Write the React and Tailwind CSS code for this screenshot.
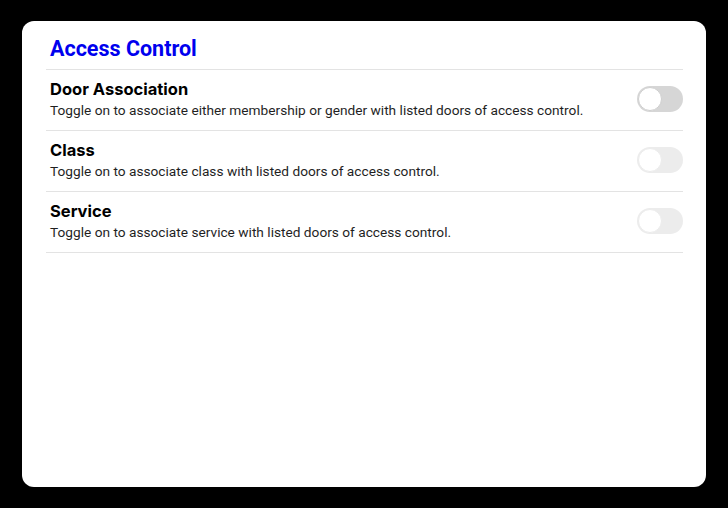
import React, { useState } from 'react';

const settings = [
  {
    id: 'door',
    title: 'Door Association',
    description: 'Toggle on to associate either membership or gender with listed doors of access control.',
    disabled: false,
  },
  {
    id: 'class',
    title: 'Class',
    description: 'Toggle on to associate class with listed doors of access control.',
    disabled: true,
  },
  {
    id: 'service',
    title: 'Service',
    description: 'Toggle on to associate service with listed doors of access control.',
    disabled: true,
  },
];

const Toggle = ({ checked, disabled, onChange }) => (
  <button
    type="button"
    role="switch"
    aria-checked={checked}
    disabled={disabled}
    onClick={onChange}
    className={`relative flex h-[26px] w-[46px] shrink-0 items-center rounded-full px-[1px] ${
      disabled ? 'bg-[#ececec]' : checked ? 'bg-[#2563eb]' : 'bg-[#d6d6d6]'
    }`}
  >
    <span
      className={`h-[24px] w-[24px] rounded-full border bg-white transition-transform ${
        disabled ? 'border-[#ececec]' : 'border-[#cfcfcf]'
      } ${checked ? 'translate-x-[20px]' : 'translate-x-0'}`}
    />
  </button>
);

const App = () => {
  const [values, setValues] = useState({ door: false, class: false, service: false });

  return (
    <div className="min-h-[508px] bg-black px-[22px] py-[21px] font-['Roboto',sans-serif]">
      <div className="h-[466px] rounded-[12px] bg-white pl-[24px] pr-[23px] pt-[14px]">
        <h1 className="border-b border-[#e3e3e3] px-1 pb-[6px] text-[21.5px] font-bold leading-7 text-[#0000ee]">
          Access Control
        </h1>

        {settings.map((item) => (
          <div key={item.id} className="flex items-center justify-between border-b border-[#e3e3e3] pl-1 pt-2 pb-[10px]">
            <div>
              <h2 className="font-[Inter,sans-serif] text-[16.5px] font-bold leading-[22px] text-black">
                {item.title}
              </h2>
              <p className="text-[13.7px] leading-5 text-[#1f1f1f]">{item.description}</p>
            </div>
            <Toggle
              checked={values[item.id]}
              disabled={item.disabled}
              onChange={() => setValues((v) => ({ ...v, [item.id]: !v[item.id] }))}
            />
          </div>
        ))}
      </div>
    </div>
  );
};

export default App;
